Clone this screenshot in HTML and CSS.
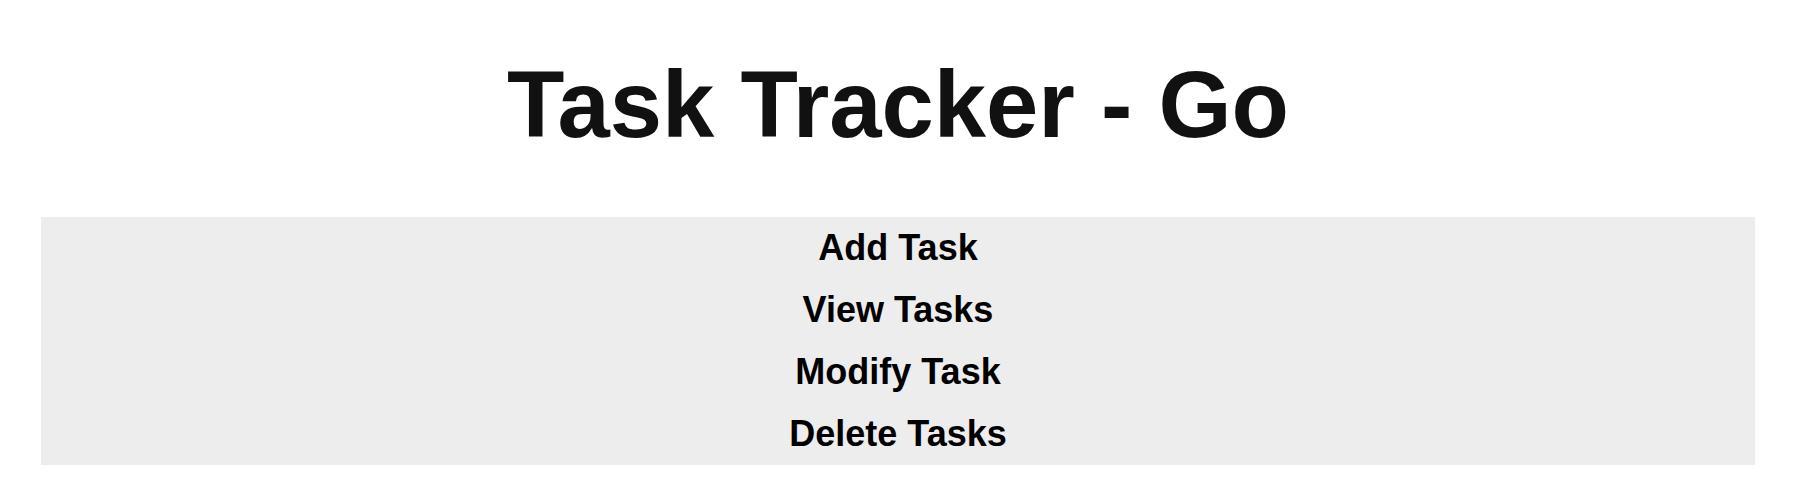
FILE: index.html
```html
<!DOCTYPE html>
<html lang="en">
<head>
<meta charset="utf-8">
<title>Task Tracker - Go</title>
<link rel="stylesheet" href="styles.css">
</head>
<body>
  <header class="header">
    <h1 class="title">Task Tracker - Go</h1>
  </header>
  <nav class="menu">
    <a class="menu-item" href="#">Add Task</a>
    <a class="menu-item" href="#">View Tasks</a>
    <a class="menu-item" href="#">Modify Task</a>
    <a class="menu-item" href="#">Delete Tasks</a>
  </nav>
</body>
</html>
```

FILE: styles.css
```css
* {
  box-sizing: border-box;
}

html, body {
  margin: 0;
  padding: 0;
  background: #ffffff;
}

body {
  font-family: "Liberation Sans", Arial, sans-serif;
}

.header {
  padding-top: 51px;
  padding-bottom: 59px;
}

.title {
  margin: 0;
  font-size: 94px;
  line-height: 107px;
  font-weight: 700;
  color: #111111;
  text-align: center;
}

.menu {
  margin: 0 41px;
  background: #ededed;
  display: flex;
  flex-direction: column;
  align-items: center;
}

.menu-item {
  display: block;
  padding: 11px 0;
  font-size: 36px;
  line-height: 40px;
  font-weight: 700;
  color: #000000;
  text-decoration: none;
}
```
